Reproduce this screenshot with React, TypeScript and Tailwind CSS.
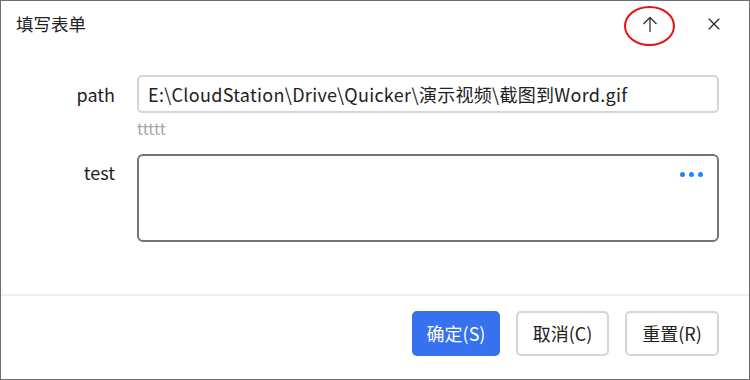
import { X } from 'lucide-react';

const font = { fontFamily: '"Noto Sans CJK SC", "Noto Sans", sans-serif' };

export default function App() {
  return (
    <div
      className="w-[750px] h-[380px] bg-white border border-[#6e6e6e] flex flex-col text-[#222]"
      style={font}
    >
      <div className="h-[46px] flex items-center pl-[15px] pr-[25px]">
        <span className="text-[17.5px] flex-1">填写表单</span>
        <div className="relative w-[16px] h-[16px] mr-[46px]">
          <svg viewBox="0 0 16 16" className="w-[16px] h-[16px]" fill="none" stroke="#333" strokeWidth={1.3}>
            <path d="M8 1.5V16M1.5 8L8 1.5L14.5 8" />
          </svg>
          <div className="absolute left-[-18px] top-[-10px] w-[51px] h-[40px] rounded-[50%] border-2 border-[#e8100e]" />
        </div>
        <X className="w-[20px] h-[20px]" strokeWidth={1.4} />
      </div>

      <div className="flex-1 flex flex-col pt-[28px] pr-[30px]">
        <div className="flex">
          <div className="w-[136px] pr-[22px] text-right text-[18px] leading-[38px]">path</div>
          <div className="flex-1 flex flex-col">
            <div className="h-[38px] border-2 border-[#d3d6dc] rounded-[5px] flex items-center px-[9px] text-[18px] tracking-[0.3px]">
              E:\CloudStation\Drive\Quicker\演示视频\截图到Word.gif
            </div>
            <div className="text-[16px] text-[#a6a6a6] leading-[18px] mt-[6px]">ttttt</div>
          </div>
        </div>

        <div className="flex mt-[17px]">
          <div className="w-[136px] pr-[22px] text-right text-[18px] pt-[5px]">test</div>
          <div className="flex-1 h-[88px] border-2 border-[#747474] rounded-[6px] flex justify-end pt-[16px] pr-[14px]">
            <div className="flex gap-[4px] h-[4px]">
              <span className="w-[5px] h-[5px] rounded-full bg-[#1e88f0]" />
              <span className="w-[5px] h-[5px] rounded-full bg-[#1e88f0]" />
              <span className="w-[5px] h-[5px] rounded-full bg-[#1e88f0]" />
            </div>
          </div>
        </div>
      </div>

      <div className="h-[2px] bg-[#efefef] mb-[15px]" />

      <div className="flex justify-end gap-[16px] pr-[30px] pb-[23px]">
        <button className="w-[88px] h-[45px] rounded-[5px] bg-[#3672f0] text-white text-[18px]">确定(S)</button>
        <button className="w-[93px] h-[45px] rounded-[5px] border-2 border-[#d3d6dc] bg-white text-[18px]">取消(C)</button>
        <button className="w-[94px] h-[45px] rounded-[5px] border-2 border-[#d3d6dc] bg-white text-[18px]">重置(R)</button>
      </div>
    </div>
  );
}
